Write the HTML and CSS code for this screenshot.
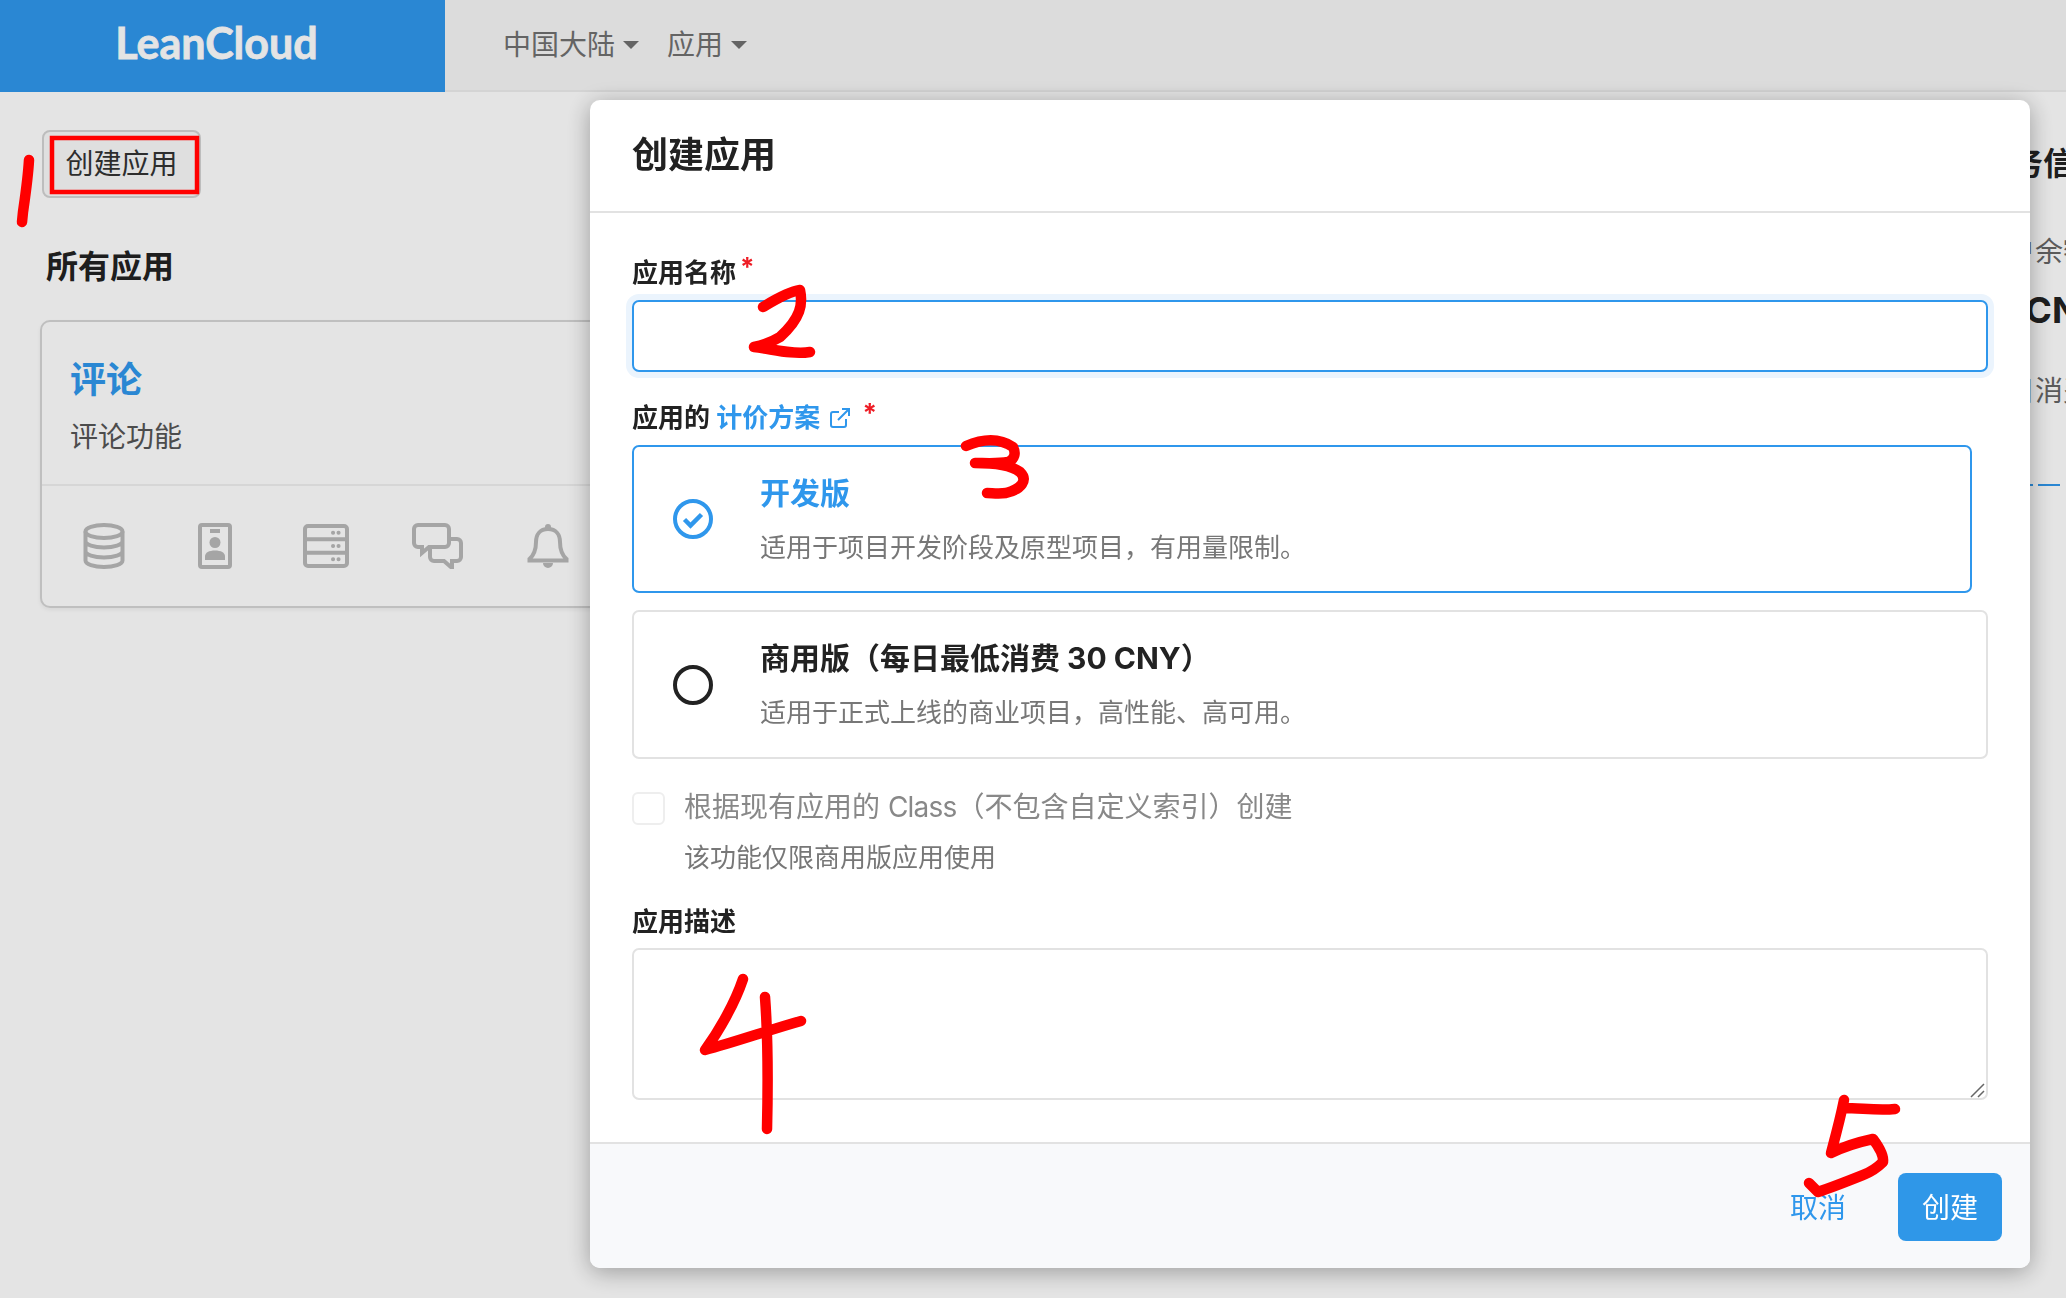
FILE: index.html
```html
<!DOCTYPE html>
<html lang="zh-CN">
<head>
<meta charset="utf-8">
<title>LeanCloud</title>
<link rel="stylesheet" href="styles.css">
</head>
<body>
<header class="topbar">
  <div class="brand">LeanCloud</div>
  <nav class="nav">
    <span class="nav-item">中国大陆<i class="caret"></i></span>
    <span class="nav-item">应用<i class="caret"></i></span>
  </nav>
</header>
<main class="page">
  <section class="apps">
    <button class="ghost-btn">创建应用</button>
    <h2 class="apps-title">所有应用</h2>
    <article class="app-card">
      <div class="app-info">
        <div class="app-name">评论</div>
        <div class="app-desc">评论功能</div>
      </div>
      <div class="app-icons">
        <svg class="app-icon" viewBox="0 0 52 46"><ellipse cx="26" cy="8.5" rx="18.5" ry="6.5"/><path d="M7.5 8.5v29c0 3.6 8.3 6.5 18.5 6.5s18.500-2.900 18.500-6.500v-29M7.500 18c0 3.600 8.300 6.500 18.500 6.500s18.500-2.900 18.500-6.500M7.500 28c0 3.600 8.300 6.500 18.500 6.500s18.500-2.900 18.500-6.500"/></svg>
        <svg class="app-icon" viewBox="0 0 52 46"><rect x="11" y="2" width="30" height="42" rx="2"/><path d="M21 8h10"/><circle class="fill" cx="26" cy="19.500" r="5.500"/><path class="fill" d="M16 37v-3.500c0-4 4-6 10-6s10 2 10 6V37z"/></svg>
        <svg class="app-icon" viewBox="0 0 52 46"><rect x="5" y="3" width="42" height="40" rx="3"/><path d="M5 16.300h42M5 29.700h42"/><path class="dots" d="M33 9.700h.1M38.500 9.700h.1M33 23h.1M38.500 23h.1M33 36.300h.1M38.500 36.300h.1"/></svg>
        <svg class="app-icon" viewBox="0 0 52 46"><path d="M19 20a4 4 0 0 1 4-4h23a4 4 0 0 1 4 4v14a4 4 0 0 1-4 4h-5v7l-8-7H23a4 4 0 0 1-4-4z"/><path class="mask" d="M3 6a4 4 0 0 1 4-4h27a4 4 0 0 1 4 4v14a4 4 0 0 1-4 4H18l-7 6v-6H7a4 4 0 0 1-4-4z"/></svg>
        <svg class="app-icon" viewBox="0 0 52 46"><path d="M26 6c-8 0-12 5.500-12 13 0 8-2 13-6.500 17v1.500h37V36c-4.500-4-6.500-9-6.500-17 0-7.500-4-13-12-13z"/><path class="fill" d="M26 1a3 3 0 0 1 3 3v3h-6V4a3 3 0 0 1 3-3zM21 40h10a5 5 0 0 1-10 0z"/></svg>
      </div>
    </article>
  </section>
  <aside class="account">
    <h2 class="account-title">服务信息</h2>
    <div class="account-label">账户余额</div>
    <div class="account-value">10 CNY</div>
    <div class="account-label account-label-2">昨日消费</div>
    <div class="account-dash"></div>
  </aside>
</main>

<div class="overlay">
  <div class="modal">
    <div class="modal-head">创建应用</div>
    <form class="modal-body">
      <label class="field-label">应用名称<sup class="req">*</sup></label>
      <input class="text-input" type="text">
      <div class="field-label label-gap">应用的 <a class="link">计价方案</a>
        <svg class="ext" viewBox="0 0 22 22"><path d="M17 12v6a2 2 0 0 1-2 2H4a2 2 0 0 1-2-2V7a2 2 0 0 1 2-2h6M13 2h7v7M20 2 9 13"/></svg>
        <sup class="req req-2">*</sup>
      </div>
      <div class="plan plan-active">
        <svg class="plan-mark" viewBox="0 0 40 40"><circle cx="20" cy="20" r="18"/><path d="m11.500 20.500 6 6 11-11"/></svg>
        <div class="plan-text">
          <div class="plan-name">开发版</div>
          <div class="plan-desc">适用于项目开发阶段及原型项目，有用量限制。</div>
        </div>
      </div>
      <div class="plan plan-other">
        <svg class="plan-mark plan-mark-off" viewBox="0 0 40 40"><circle cx="20" cy="20" r="18"/></svg>
        <div class="plan-text">
          <div class="plan-name">商用版（每日最低消费 30 CNY）</div>
          <div class="plan-desc">适用于正式上线的商业项目，高性能、高可用。</div>
        </div>
      </div>
      <div class="clone">
        <span class="checkbox"></span>
        <div>
          <div class="clone-line">根据现有应用的 <span class="latin">Class</span>（不包含自定义索引）创建</div>
          <div class="clone-line clone-note">该功能仅限商用版应用使用</div>
        </div>
      </div>
      <label class="field-label label-gap-2">应用描述</label>
      <div class="area-wrap">
        <textarea class="text-area"></textarea>
        <svg class="grip" viewBox="0 0 15 15"><path d="M1 14 14 1M8 14l6-6"/></svg>
      </div>
    </form>
    <div class="modal-foot">
      <a class="cancel">取消</a>
      <button class="primary-btn" type="button">创建</button>
    </div>
  </div>
</div>

<svg class="ink" viewBox="0 0 2066 1298" width="2066" height="1298">
  <rect class="ink-box" x="52" y="138" width="145" height="54"/>
  <path d="M29 160c-1 18-4 38-6 52l-1 10"/>
  <path d="M763 307c10-6 24-15 37-17 3 14 1 28-20 47-8 5-16 8-26 10 18 2 38 8 56 5"/>
  <path d="M966 446c14-6 32-9 47 1 3 6 2 12-5 15-10 2-24 1-33 1 16 0 36 2 45 9 8 8 2 17-14 21-8 1-14 0-19 0"/>
  <path d="M743 979c-8 24-24 52-38 71 30-8 64-20 96-29M765 997c3 40 3 90 2 132"/>
  <path d="M1844 1100c-4 20-9 38-13 53 14-7 28-11 42-14 6 8 11 16 10 23-6 6-12 10-20 13-15 6-30 12-45 17l-9-9M1844 1108c17 0 34 3 51 1"/>
</svg>
</body>
</html>
```
FILE: styles.css
```css
* { box-sizing: border-box; }
html, body { margin: 0; padding: 0; height: 100%; overflow: hidden; }
body {
  width: 2066px;
  height: 1298px;
  background: #fff;
  color: #222;
  font-family: Inter, "Noto Sans CJK SC", sans-serif;
  font-size: 28px;
}
.topbar {
  display: flex;
  height: 92px;
  background: #f7f7f7;
  border-bottom: 2px solid #ededed;
}
.brand {
  width: 445px;
  height: 92px;
  padding-right: 12px;
  background: #2f97ec;
  color: #fff;
  font-family: "Lato", sans-serif;
  font-size: 43px;
  font-weight: 700;
  line-height: 86px;
  text-align: center;
  -webkit-text-stroke: .8px #fff;
}
.nav { display: flex; align-items: center; gap: 28px; padding-left: 58px; height: 86px; color: #707070; }
.nav-item { display: flex; align-items: center; gap: 8px; }
.caret {
  width: 0; height: 0;
  border-left: 8px solid transparent;
  border-right: 8px solid transparent;
  border-top: 8px solid #707070;
  margin-top: 3px;
}
.page { display: flex; padding-left: 40px; }
.apps { width: 900px; }
.ghost-btn {
  display: block;
  margin: 38px 0 0 2px;
  width: 159px;
  height: 68px;
  padding: 0 0 4px;
  background: #fafafa;
  border: 2px solid #d4d4d4;
  border-radius: 8px;
  color: #333;
  font: inherit;
}
.apps-title { margin: 48px 0 0 6px; font-size: 32px; line-height: 42px; font-weight: 700; color: #222; }
.app-card {
  margin-top: 32px;
  height: 288px;
  background: #fff;
  border: 2px solid #d6d6d6;
  border-radius: 10px;
  box-shadow: 0 2px 4px rgba(0,0,0,.06);
}
.app-info { height: 164px; padding: 33px 0 0 28px; border-bottom: 2px solid #f0f0f0; }
.app-name { font-size: 36px; line-height: 50px; font-weight: 700; color: #2f97ec; }
.app-desc { margin-top: 12px; line-height: 40px; color: #555; }
.app-icons { display: flex; gap: 59px; padding: 37px 0 0 36px; }
.app-icon { width: 52px; height: 46px; fill: none; stroke: #b9b9b9; stroke-width: 4; }
.app-icon .fill { fill: #b9b9b9; stroke: none; }
.app-icon .dots { stroke-linecap: round; stroke-width: 4; }
.app-icon .mask { fill: #fff; }
.account { margin-left: auto; width: 87px; white-space: nowrap; }
.account-title { margin: 51px 0 0; font-size: 32px; line-height: 42px; font-weight: 700; }
.account-label { margin-top: 47px; line-height: 40px; color: #666; }
.account-value { margin: 14px 0 0 -2px; font-size: 36px; line-height: 48px; font-weight: 700; }
.account-label-2 { margin-top: 37px; }
.account-dash {
  margin-top: 73px;
  width: 81px;
  height: 2px;
  background: repeating-linear-gradient(90deg, #2f97ec 0 22px, transparent 22px 27px);
  background-position: 5px 0;
}
.overlay { position: fixed; inset: 0; background: rgba(0,0,0,.106); }
.modal {
  position: absolute;
  left: 590px;
  top: 100px;
  width: 1440px;
  background: #fff;
  border-radius: 10px;
  box-shadow: 0 4px 24px rgba(0,0,0,.32);
  overflow: hidden;
}
.modal-head {
  height: 113px;
  padding-left: 42px;
  border-bottom: 2px solid #e2e2e2;
  font-size: 36px;
  font-weight: 700;
  line-height: 110px;
  color: #222;
}
.modal-body { display: flex; flex-direction: column; align-items: flex-start; padding: 40px 42px 42px 42px; }
.field-label { display: block; height: 40px; font-size: 26px; font-weight: 700; line-height: 40px; color: #222; white-space: nowrap; }
.label-gap { margin-top: 26px; }
.label-gap-2 { margin-top: 24px; }
.req { position: relative; top: -6px; margin-left: 4px; color: #ee1c25; font-size: 26px; line-height: 0; vertical-align: baseline; }
.req-2 { margin-left: 5px; top: -5px; }
.link { color: #2f97ec; }
.ext { width: 22px; height: 22px; margin-left: 3px; vertical-align: -2px; fill: none; stroke: #2f97ec; stroke-width: 2; }
.text-input {
  display: block;
  margin-top: 7px;
  width: 100%;
  height: 72px;
  border: 2px solid #2f97ec;
  border-radius: 7px;
  outline: none;
  background: #fff;
  box-shadow: 0 0 0 6px #ebf4fd;
}
.plan { display: flex; align-items: center; border-radius: 7px; background: #fff; padding-left: 39px; }
.plan-active { margin-top: 7px; width: 1340px; height: 148px; border: 2px solid #2f97ec; }
.plan-other { margin-top: 17px; width: 100%; height: 149px; border: 2px solid #e2e2e2; }
.plan-mark { width: 40px; height: 40px; flex: none; fill: none; stroke: #2f97ec; stroke-width: 4; }
.plan-mark path { stroke-width: 4.500; }
.plan-mark-off { stroke: #222; }
.plan-text { margin-left: 47px; padding-top: 2px; }
.plan-name { font-size: 30px; font-weight: 700; line-height: 40px; color: #222; }
.plan-active .plan-name { color: #2f97ec; }
.plan-desc { margin-top: 15px; font-size: 26px; line-height: 40px; color: #777; }
.clone { display: flex; gap: 19px; margin-top: 28px; }
.checkbox { display: block; width: 33px; height: 33px; margin-top: 5px; border: 2px solid #eee; border-radius: 6px; }
.clone-line { font-size: 28px; line-height: 40px; color: #888; white-space: nowrap; }
.latin { letter-spacing: -.8px; }
.clone-note { margin-top: 11px; font-size: 26px; color: #777; }
.area-wrap { position: relative; margin-top: 6px; width: 100%; }
.text-area {
  display: block;
  width: 100%;
  height: 152px;
  border: 2px solid #e2e2e2;
  border-radius: 7px;
  outline: none;
  background: #fff;
  resize: none;
}
.grip { position: absolute; right: 3px; bottom: 2px; width: 15px; height: 15px; fill: none; stroke: #666; stroke-width: 1.500; }
.modal-foot {
  display: flex;
  align-items: center;
  justify-content: flex-end;
  gap: 52px;
  height: 126px;
  padding: 0 28px 0 0;
  background: #f8f9fb;
  border-top: 2px solid #e2e2e2;
  color: #2f97ec;
}
.cancel { margin-top: -1px; color: #2f97ec; }
.primary-btn {
  width: 104px;
  height: 68px;
  margin-top: 2px;
  padding: 0 0 3px;
  border: 0;
  border-radius: 8px;
  background: #2f97e8;
  color: #fff;
  font: inherit;
}
.ink {
  position: absolute;
  left: 0;
  top: 0;
  fill: none;
  stroke: #f00;
  stroke-width: 10.500;
  stroke-linecap: round;
  stroke-linejoin: round;
}
.ink-box { stroke-width: 4.500; stroke-linecap: butt; stroke-linejoin: miter; }
```
